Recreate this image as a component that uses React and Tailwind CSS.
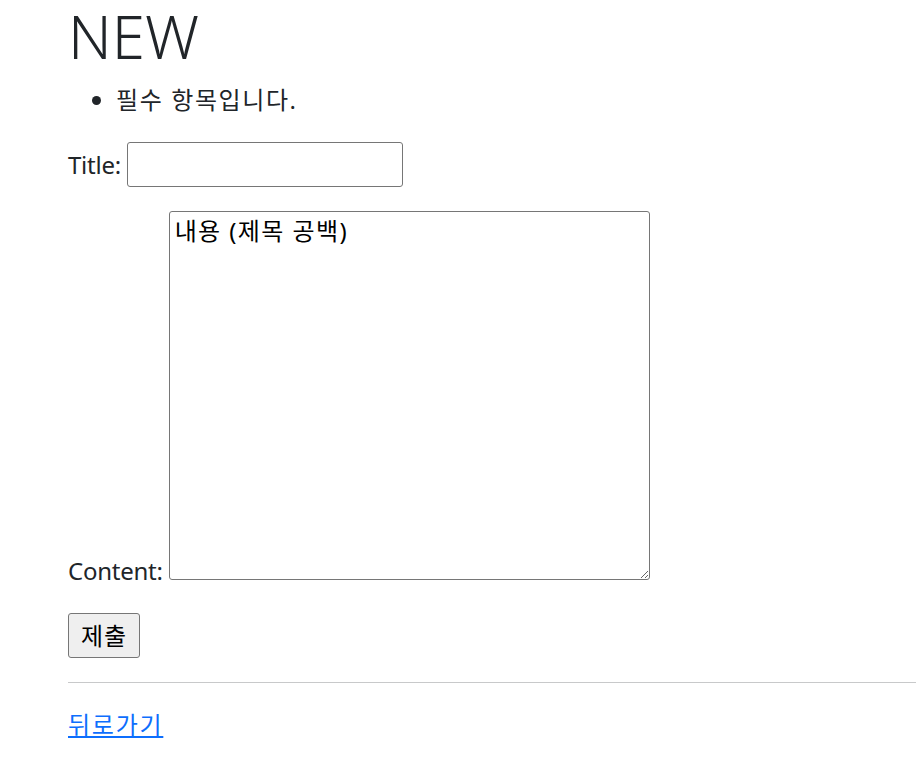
export default function App() {
  const font = { fontFamily: '"Noto Sans", "Noto Sans CJK KR", sans-serif' };
  return (
    <div className="min-h-screen bg-white pl-[68px] text-[#212529] text-[24px] leading-[36px]" style={font}>
      <h1 className="m-0 mb-[10px] text-[60px] leading-[72px] font-light text-[#212529]">NEW</h1>
      <ul className="m-0 mb-[24px] pl-[48px] list-disc">
        <li className="tracking-[1.6px]">필수 항목입니다.</li>
      </ul>
      <form>
        <div className="mb-[24px]">
          <label className="tracking-[-0.25px] inline-block translate-y-[3px]">Title:&nbsp;</label>
          <input
            type="text"
            className="w-[276px] h-[45px] border border-[#767676] rounded-[3px] px-[3px] align-middle text-[24px] bg-white"
            style={font}
          />
        </div>
        <div className="mb-[24px]">
          <label className="tracking-[-0.25px]">Content: </label>
          <textarea
            className="w-[481px] h-[369px] border border-[#767676] rounded-[3px] px-[5px] py-[3px] text-[24px] leading-[32px] tracking-[1.4px] text-black bg-white resize"
            style={font}
            defaultValue="내용 (제목 공백)"
          />
        </div>
        <button
          type="button"
          className="w-[72px] h-[45px] bg-[#efefef] border border-[#767676] rounded-[3px] text-[24px] tracking-[1px] text-black"
          style={font}
        >
          제출
        </button>
      </form>
      <hr className="my-[24px] border-0 border-t border-[#c8c9ca]" />
      <a href="#" className="text-[#0d6efd] underline tracking-[1.75px]">뒤로가기</a>
    </div>
  );
}
